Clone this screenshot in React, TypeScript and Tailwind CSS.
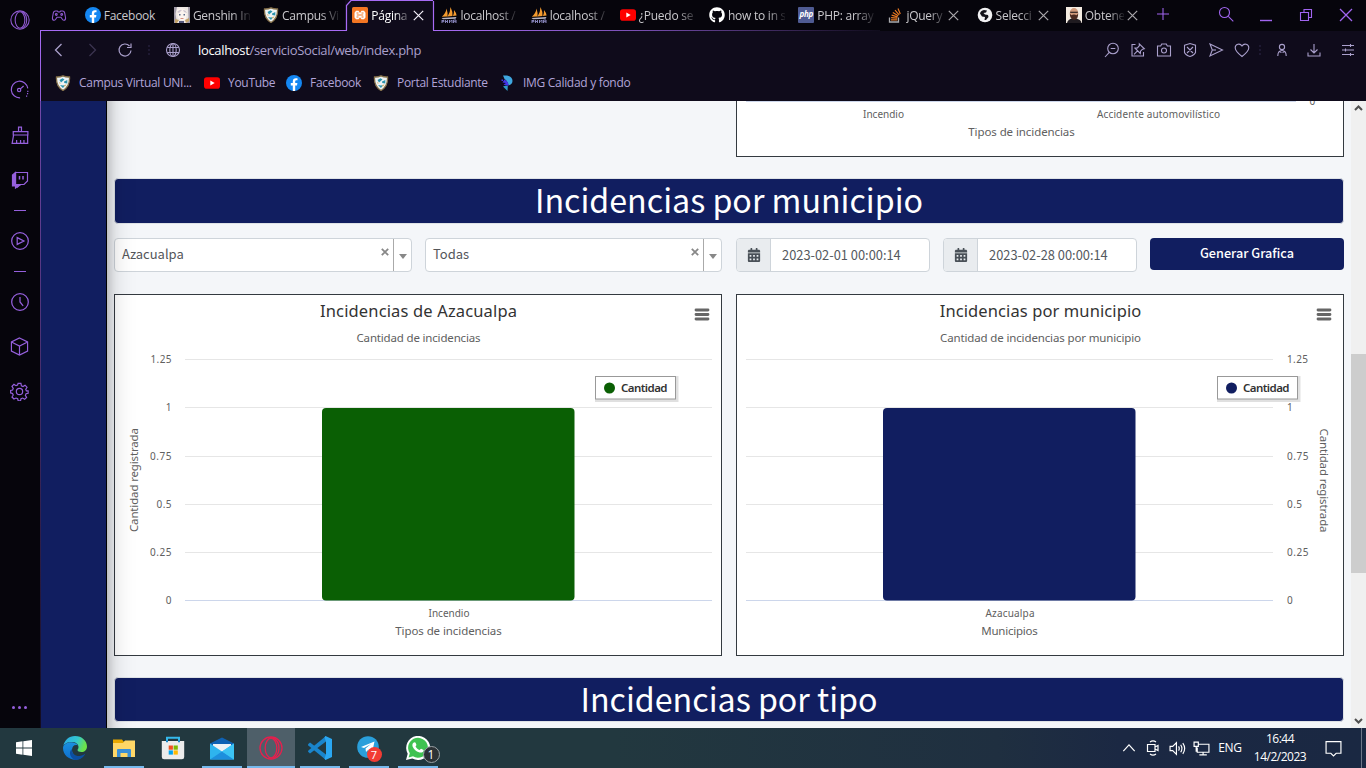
import type { ReactNode } from "react";
import { FaCalendarAlt, FaGithub } from "react-icons/fa";

const UI = "font-['Open_Sans','Noto_Sans',sans-serif]";
const BODY = "font-['Noto_Sans_CJK_SC',sans-serif]";

/* ---------- favicons ---------- */

const Fb = () => (
  <svg width="16" height="16" viewBox="0 0 16 16" className="shrink-0">
    <circle cx="8" cy="8" r="8" fill="#1487f2" />
    <path d="M6.800 16V10.400H4.800V8.100H6.800V6.400C6.800 4.300 8 3.200 9.900 3.200c.8 0 1.600.1 1.600.1v2h-1c-1 0-1.300.6-1.300 1.200v1.600h2.200l-.4 2.300H9.200V16z" fill="#fff" />
  </svg>
);
const Shield = () => (
  <svg width="16" height="16" viewBox="0 0 16 16" className="shrink-0">
    <path d="M1.500 2Q5 2.200 8 .8Q11 2.200 14.500 2C15 9 12.500 13 8 15.500C3.500 13 1 9 1.500 2z" fill="#eef3f4" stroke="#84704a" strokeWidth="1.300" />
    <path d="M4.500 5l3-1.800 2 1.200-3.500 3zM9 6.500l3.300-1.500v3.500l-3-.5zM5 10l3 .5 2-.5-2 3z" fill="#2b93ad" />
    <path d="M9.500 10l2-.5-2 2.500zM4 7l1.500 1L5 9z" fill="#dba33c" />
  </svg>
);
const Youtube = () => (
  <svg width="16" height="16" viewBox="0 0 16 16" className="shrink-0">
    <rect x="0" y="2.300" width="16" height="11.400" rx="2.800" fill="#f00" />
    <path d="M6.300 5.400v5.200L10.700 8z" fill="#fff" />
  </svg>
);
const Genshin = () => (
  <svg width="16" height="16" viewBox="0 0 16 16" className="shrink-0">
    <rect width="16" height="16" fill="#ece6e3" />
    <path d="M0 0h3L1.500 7 3 16H0zM14 0h2v16h-3l1.500-6z" fill="#a19ba8" />
    <path d="M3 3q5-4 10 1l-1 8q-4 3-8-1z" fill="#fbf3ee" />
    <path d="M3 5q3-3 5-2L5 6zM9 3q3 0 4 3l-3-1z" fill="#cfc6cf" />
    <path d="M5 7h1.500v1.500H5zM9.500 7H11v1.500H9.500z" fill="#5b6a88" />
    <path d="M6.500 11h3v1h-3z" fill="#d68e7e" />
    <path d="M1 12l4 1-2 3H1zM11 13l4-2v3l-3 2z" fill="#c2a36a" />
    <path d="M5 14h5v2H5z" fill="#54587a" />
  </svg>
);
const Xampp = () => (
  <svg width="16" height="16" viewBox="0 0 16 16" className="shrink-0">
    <rect width="16" height="16" rx="1.500" fill="#f37623" />
    <path d="M4 3.800h2.500L8 6l1.500-2.200H12l1.500 2v4.700L12 12.300H9.500L8 10.200l-1.500 2.100H4l-1.500-1.800V5.800z" fill="#fff" />
    <path d="M4.500 6h2M9.500 6h2M4.500 10h2M9.500 10h2M4.800 8h6.400" stroke="#f37623" strokeWidth="1.200" />
  </svg>
);
const Pma = () => (
  <svg width="16" height="16" viewBox="0 0 16 16" className="shrink-0">
    <path d="M.8 9.800Q5 6 5.500 1.500Q7 6 6.500 9.500zM6.500 9.500Q9.500 5 9.500 0Q12 5 11.500 9zM12 9Q13.300 6 13 3Q15.500 6 15.600 8.500z" fill="#f39b2e" />
    <path d="M.5 11l15-1-1 1.700L2 12.200z" fill="#b9b6c2" />
    <path d="M1 13v3M1 13.500h2v1.200H1M4.500 13v3M4.500 14.500h2M6.500 13v3M8.500 16v-3l1.200 1.500L11 13v3M12.500 16v-3h2.500v3M12.500 14.700H15" stroke="#8583b8" strokeWidth="1" fill="none" />
  </svg>
);
const Php = () => (
  <span className="flex h-4 w-4 shrink-0 items-center justify-center rounded-[1px] bg-[#4f5b93] pb-0.5 text-[8px] font-bold italic leading-none tracking-[-0.300px] text-white">php</span>
);
const Stack = () => (
  <svg width="16" height="16" viewBox="0 0 16 16" className="shrink-0" fill="none">
    <path d="M2.500 10.500V15h9v-4.500" stroke="#a9aaad" strokeWidth="1.300" />
    <path d="M4 12.800h6.300M4.100 10.600l6.200.6M4.600 8.200l6 1.600M5.800 5.600l5.400 3.100M8 3.200l4.200 4.600M11 1.500l2.300 5.500" stroke="#e87922" strokeWidth="1.200" />
  </svg>
);
const Globe = () => (
  <svg width="16" height="16" viewBox="0 0 16 16" className="shrink-0">
    <circle cx="8" cy="8" r="7.300" fill="#f1f1f3" />
    <path d="M3 6.500q.5-3 4-3.500l3 .5-1 2-2.500.5L8 7.500l3 .5.5 2L9 13H7.500l.5-3-3-.5z" fill="#111018" />
  </svg>
);
const Face = () => (
  <svg width="16" height="16" viewBox="0 0 16 16" className="shrink-0">
    <rect width="16" height="16" fill="#f4ece2" />
    <path d="M1 16q1-4 5-4.500l5 .3q4 1 4.500 4.200z" fill="#1f1b20" />
    <ellipse cx="8" cy="6" rx="4.200" ry="5" fill="#d09a7b" />
    <path d="M3.800 6.500q0 6 4.200 6.200t4.200-6.200l-1.500 1.700q-2.700-1.200-5.400 0z" fill="#4a2a20" />
    <path d="M4.200 5.300h7.600" stroke="#2f2322" strokeWidth="1.200" />
  </svg>
);

/* ---------- browser chrome ---------- */

type Tab = { icon: ReactNode; title: string; active?: boolean; close?: boolean; full?: boolean };
const tabs: Tab[] = [
  { icon: <Fb />, title: "Facebook", full: true },
  { icon: <Genshin />, title: "Genshin In" },
  { icon: <Shield />, title: "Campus Vi" },
  { icon: <Xampp />, title: "Página", active: true, close: true },
  { icon: <Pma />, title: "localhost /" },
  { icon: <Pma />, title: "localhost /" },
  { icon: <Youtube />, title: "¿Puedo se" },
  { icon: <FaGithub className="h-4 w-4 shrink-0 text-white" />, title: "how to in s" },
  { icon: <Php />, title: "PHP: array" },
  { icon: <Stack />, title: "jQuery", close: true },
  { icon: <Globe />, title: "Selecci", close: true },
  { icon: <Face />, title: "Obtene", close: true },
];

function TabItem({ icon, title, active, close, full }: Tab) {
  const fade = full
    ? "w-[57px]"
    : close
      ? "w-[39px] [mask-image:linear-gradient(to_right,black_60%,transparent_105%)]"
      : "w-[57px] [mask-image:linear-gradient(to_right,black_68%,transparent_104%)]";
  return (
    <div className={`flex h-[30px] w-[89.200px] shrink-0 items-center ${active ? "text-white" : "text-[#c9c8cc]"}`}>
      <span className="ml-[7px] flex">{icon}</span>
      <span className={`ml-[3px] whitespace-nowrap pt-px text-[12px] leading-[18px] tracking-[-0.250px] ${fade}`}>{title}</span>
      {close && (
        <svg width="11" height="11" viewBox="0 0 11 11" className="ml-[3px] shrink-0" stroke={active ? "#f4f0fa" : "#aaa8ac"} strokeWidth="1.200">
          <path d="M.8.8l9.400 9.400M10.200.8L.8 10.200" />
        </svg>
      )}
    </div>
  );
}

function ChromeOutline() {
  return (
    <svg className="pointer-events-none absolute left-0 top-0" width="1366" height="728" fill="none" strokeWidth="1.200">
      <defs>
        <linearGradient id="down" x1="0" y1="30" x2="0" y2="728" gradientUnits="userSpaceOnUse">
          <stop offset="0" stopColor="#a76bf5" />
          <stop offset=".15" stopColor="#8a58cc" />
          <stop offset="1" stopColor="#191028" />
        </linearGradient>
        <linearGradient id="across" x1="433" y1="0" x2="880" y2="0" gradientUnits="userSpaceOnUse">
          <stop offset="0" stopColor="#a76bf5" />
          <stop offset=".45" stopColor="#7a50b4" />
          <stop offset="1" stopColor="#100c1c" />
        </linearGradient>
      </defs>
      <rect x="40" y="30" width="1" height="698" fill="url(#down)" />
      <path d="M346.500 30V5.500L351 .5H433" stroke="#a76bf5" />
      <path d="M433.500 1v29" stroke="#a76bf5" />
      <rect x="40" y="30" width="307" height="1" fill="#a76bf5" />
      <rect x="433" y="30" width="447" height="1" fill="url(#across)" />
    </svg>
  );
}

const Stroke = ({ children, w = 16, c = "", sw = 1.1 }: { children: ReactNode; w?: number; c?: string; sw?: number }) => (
  <svg width={w} height={w} viewBox="0 0 16 16" fill="none" stroke="currentColor" strokeWidth={sw} className={`shrink-0 ${c}`}>
    {children}
  </svg>
);

function TabBar() {
  return (
    <div className="flex h-[31px] bg-[#06050c]">
      <div className="flex w-[37.700px] shrink-0 items-center justify-center text-[#8d59ce]">
        <Stroke>
          <path d="M4.500 3h1.800l1 1h1.400l1-1h1.800q2 0 2.300 2.500l.8 4.500q0 2.300-1.800 2.300-1 0-2-1.800l-.8-1.200H6l-.8 1.200q-1 1.800-2 1.800-1.800 0-1.800-2.300L2.200 5.500q.3-2.500 2.300-2.500z" />
          <circle cx="5.300" cy="6.500" r=".9" />
          <circle cx="10.700" cy="6.500" r=".9" />
        </Stroke>
      </div>
      <div className="flex min-w-0 flex-1">
        {tabs.map((t, i) => (
          <div key={i} className={t.active ? "h-[31px] bg-[#0f0b1b]" : "h-[31px]"}>
            <TabItem {...t} />
          </div>
        ))}
        <div className="flex h-[27px] w-[30px] items-center pl-[9px] text-[#a165f0]">
          <Stroke w={12} sw={1.4}><path d="M8 0v16M0 8h16" /></Stroke>
        </div>
      </div>
      <div className="flex h-[30px] w-[160px] items-center text-[#a165f0]">
        <div className="flex w-10 justify-center"><Stroke c="-mt-0.5"><circle cx="6.500" cy="6.500" r="5" /><path d="M10.300 10.300l5 5" /></Stroke></div>
        <div className="flex w-10 justify-center"><Stroke><path d="M2 13.500h12" strokeWidth="1.400" /></Stroke></div>
        <div className="flex w-10 justify-center"><Stroke><path d="M2.500 5.500h8v8h-8zM6 5.500v-3h7.500v8h-3" /></Stroke></div>
        <div className="flex w-10 justify-center"><Stroke sw={1.3}><path d="M2 2l12 12M14 2L2 14" /></Stroke></div>
      </div>
    </div>
  );
}

function AddressBar() {
  return (
    <div className="flex h-[38px] items-center pl-px text-[#aaa0cc]">
      <div className="flex w-[35px] justify-center"><Stroke><path d="M10.500 2L4.500 8l6 6" strokeWidth="1.300" /></Stroke></div>
      <div className="flex w-[32px] justify-center text-[#3b3450]"><Stroke><path d="M5.500 2L11.500 8l-6 6" strokeWidth="1.300" /></Stroke></div>
      <div className="flex w-[33px] justify-center"><Stroke><path d="M14 8.500A6 6 0 1 1 12.500 4M14 1.500v4h-4" strokeWidth="1.200" /></Stroke></div>
      <div className="flex w-[15px] justify-center text-[#2d2745]"><Stroke><path d="M8 3v2M8 7v2M8 11v2" /></Stroke></div>
      <div className="flex w-[34px] justify-center">
        <Stroke><circle cx="8" cy="8" r="6.500" /><ellipse cx="8" cy="8" rx="3.200" ry="6.500" /><path d="M2.200 5.500h11.600M2.200 10.500h11.600M8 1.500v13" /></Stroke>
      </div>
      <div className="ml-[8px] flex-1 whitespace-nowrap text-[13px] leading-5 tracking-[-0.330px]">
        <span className="text-white">localhost</span>/servicioSocial/web/index.php
      </div>
      <div className="-mr-px flex items-center">
        <div className="flex w-[26px] justify-center"><Stroke><circle cx="9" cy="6.500" r="5.300" /><path d="M5.300 10.300L1 15M6.700 6.500h4.600" /></Stroke></div>
        <div className="flex w-[26px] justify-center"><Stroke><path d="M5.500 2.500H2v11.500h11.500v-4" /><path d="M9.300 1.800l5 5-1.800.4-2 2-.2 2.300L5 6.200l2.400-.3 1.900-2zM7.500 8.800L4 12.300" /></Stroke></div>
        <div className="flex w-[26px] justify-center"><Stroke><path d="M1.500 4h3.200l1-2h4.600l1 2h3.200v10h-13z" /><circle cx="8" cy="8.500" r="2.500" /></Stroke></div>
        <div className="flex w-[26px] justify-center"><Stroke><path d="M2.500 3.200L8 1.500l5.500 1.700v7.300q-1 2.500-5.500 4-4.500-1.500-5.500-4zM5 5l6 6M11 5l-6 6" /></Stroke></div>
        <div className="flex w-[26px] justify-center"><Stroke><path d="M2 2l12.500 6L2 14l2.300-6z" /><path d="M4.300 8H8" /></Stroke></div>
        <div className="flex w-[26px] justify-center"><Stroke><path d="M8 14.500C4 11.300 1.200 8.800 1.200 5.700 1.200 2 6 .8 8 4c2-3.200 6.800-2 6.800 1.700 0 3.100-2.800 5.600-6.800 8.800z" /></Stroke></div>
        <div className="flex w-[9px] justify-center text-[#2d2745]"><Stroke><path d="M8 3v2M8 7v2M8 11v2" /></Stroke></div>
        <div className="flex w-[35px] justify-center"><Stroke><circle cx="8" cy="5" r="2.600" /><path d="M3.800 14q0-5.500 4.200-5.500T12.200 14M5 9.500l2.500 1M11 9.500l-2.500 1" /></Stroke></div>
        <div className="flex w-[30px] justify-center"><Stroke><path d="M8 2v8.500M4.500 7.500L8 11l3.500-3.500M2 10.500V14h12v-3.500" /></Stroke></div>
        <div className="flex w-[38px] justify-center"><Stroke><path d="M2 3.500h12M2 8h12M2 12.500h12M10.500 2v3M5.500 6.500v3M10.500 11v3" /></Stroke></div>
      </div>
    </div>
  );
}

function Bookmarks() {
  return (
    <div className="flex h-[32px] items-center whitespace-nowrap pb-[4px] pl-[15px] text-[12px] leading-4 tracking-[-0.300px] text-[#b1a4d8]">
      <div className="flex w-[149px] items-center gap-[8px]"><Shield />Campus Virtual UNI...</div>
      <div className="flex w-[82px] items-center gap-[8px]"><Youtube />YouTube</div>
      <div className="flex w-[87px] items-center gap-[8px]"><Fb />Facebook</div>
      <div className="flex w-[126px] items-center gap-[8px]"><Shield />Portal Estudiante</div>
      <div className="flex items-center gap-[8px]">
        <svg width="16" height="16" viewBox="0 0 16 16">
          <path d="M4 .5h4q5.500 1 5.500 5.500 0 3-4 4.500-.5-4-4-6.500z" fill="#3fa7e0" />
          <path d="M5.500 4.500q4 2 4 6-2.500.5-5-1l2.500-1.500-3.500-.5z" fill="#4636e8" />
          <path d="M2.500 4.500h1.500V6H2.500z" fill="#4636e8" />
          <path d="M4 11.500l4.500 4.500 .3-5q-2.500-.8-4.800.5z" fill="#2f9ac4" />
        </svg>
        IMG Calidad y fondo
      </div>
    </div>
  );
}

function OperaRing({ size, color }: { size: number; color: string }) {
  return (
    <svg width={size} height={size} viewBox="0 0 24 24" fill="none" stroke={color} strokeWidth="1.300">
      <circle cx="12" cy="12" r="11" />
      <ellipse cx="12" cy="12" rx="5.800" ry="9.800" />
      <path d="M14 1.800q6 3 6 10.200t-6 10.200" />
    </svg>
  );
}

function SideRail() {
  const cell = "flex h-[45px] items-center justify-center";
  return (
    <div className="flex w-10 shrink-0 flex-col bg-[#06050c] pr-[1px] text-[#9560dd]">
      <div className="flex h-[67px] justify-center pt-[10px]"><OperaRing size={20} color="#8d59ce" /></div>
      <div className={cell}><Stroke w={19} sw={1}><path d="M8.500 15A7 7 0 1 1 15 7M15 9v1M14.800 11v1M14 13v1" /><circle cx="7.700" cy="8.500" r="1.400" /><path d="M8.700 7.500L11.500 5" /></Stroke></div>
      <div className={cell}><Stroke w={18} sw={1.1}><path d="M6.700 5V1h2.600v4M2 5h13v3H2zM2.300 8L1 15.500h13.800V8M5 15v-2.500M8.500 15v-2.500M11.500 15v-2.500" /></Stroke></div>
      <div className={cell}>
        <svg width="18" height="18" viewBox="0 0 18 18" fill="none" stroke="currentColor" strokeWidth="1.200">
          <path d="M4.500 1.500h12V10l-3.500 3.500h-3.500L6.500 16v-2.500h-2z" />
          <path d="M4.500 1.500L1.500 4v11h3v2l2.500-2 2.500-1.500h-5z" fill="currentColor" />
          <path d="M8.500 5v3.500M12 5v3.500" strokeWidth="1.500" />
        </svg>
      </div>
      <div className="flex h-[16px] items-center justify-center"><span className="h-px w-3 bg-[#9560dd]" /></div>
      <div className={cell}><Stroke w={18} sw={1.1}><circle cx="8" cy="8" r="7.400" /><path d="M5.500 5v6l6-3z" /></Stroke></div>
      <div className="flex h-[16px] items-center justify-center"><span className="h-px w-3 bg-[#9560dd]" /></div>
      <div className={cell}><Stroke w={18} sw={1.1}><circle cx="8" cy="8" r="7.400" /><path d="M8 3.500V8l2.800 3.500" /></Stroke></div>
      <div className={cell}><Stroke w={19} sw={1}><path d="M8 .8l6.800 3.400v7.600L8 15.200l-6.800-3.400V4.200zM1.200 4.200L8 7.700l6.800-3.500M8 7.700v7.500" /></Stroke></div>
      <div className={cell}>
        <svg width="19" height="19" viewBox="0 0 24 24" fill="none" stroke="currentColor" strokeWidth="1.500">
          <circle cx="12" cy="12" r="4" />
          <path d="M10.200 1.800h3.600l.6 3 2 .9 2.600-1.700 2.500 2.600-1.600 2.600.8 2h2.200v3l-2.600.6-.9 2.100 1.600 2.500-2.500 2.500-2.600-1.600-2 .9-.6 2.500h-3l-.6-2.500-2.100-.9L5 21.500 2.500 19l1.600-2.600-.9-2-2.400-.6v-3.200l2.500-.4.8-2.200L2.500 5.500 5 3l2.600 1.600 2-.8z" />
        </svg>
      </div>
      <div className="flex flex-1 items-end justify-center gap-[3px] pb-[19px]">
        <span className="h-[3px] w-[3px] rounded-full bg-[#9560dd]" />
        <span className="h-[3px] w-[3px] rounded-full bg-[#9560dd]" />
        <span className="h-[3px] w-[3px] rounded-full bg-[#9560dd]" />
      </div>
    </div>
  );
}

/* ---------- page ---------- */

function Banner({ children, h }: { children: ReactNode; h: string }) {
  return (
    <div className={`${h} flex shrink-0 items-center justify-center rounded-[4px] border border-[#dee2e6] bg-[#111e60] pb-[4px] text-[32.200px] leading-[40px] text-white`}>
      <span>{children}</span>
    </div>
  );
}

function Select({ value, w }: { value: string; w: string }) {
  return (
    <div className={`${w} flex h-[34px] rounded-[4px] border border-[#ced4da] bg-white text-[#54565a]`}>
      <span className="flex-1 pl-[7px] pt-[5px] text-[13px] leading-[20px]">{value}</span>
      <svg width="8" height="8" viewBox="0 0 8 8" className="mr-[4px] mt-[9px]" stroke="#888" strokeWidth="1.800"><path d="M.8.8l6.400 6.400M7.200.8L.8 7.200" /></svg>
      <span className="flex w-[18px] justify-center border-l border-[#aaa] pt-[15px]">
        <svg width="8" height="5" viewBox="0 0 8 5"><path d="M0 0h8L4 5z" fill="#888" /></svg>
      </span>
    </div>
  );
}

function DateField({ value }: { value: string }) {
  return (
    <div className="flex h-[34px] w-[194px] overflow-hidden rounded-[4px] border border-[#ced4da] bg-white text-[#54595e]">
      <span className="flex w-[34px] items-center justify-center border-r border-[#ced4da] bg-[#e9ecef]">
        <FaCalendarAlt className="h-[14px] w-[14px] text-[#495057]" />
      </span>
      <span className="whitespace-nowrap pl-[11px] pt-[6px] text-[12.850px] leading-[20px]">{value}</span>
    </div>
  );
}

const grid = [65.5, 113.5, 162.5, 210.5, 258.5, 306.5];
const ticks = ["1.25", "1", "0.75", "0.5", "0.25", "0"];
const tickW = [21, 5.5, 21.5, 15, 21.5, 6];

type Series = {
  title: string; titleW: number; sub: string; subW: number;
  cat: string; catW: number; axis: string; axisW: number;
  color: string; opposite?: boolean;
};

function Chart({ title, titleW, sub, subW, cat, catW, axis, axisW, color, opposite }: Series) {
  const x0 = opposite ? 10 : 71;
  const mid = x0 + 263.5;
  const barX = x0 + 137;
  return (
    <div className="h-[362px] w-[608px] border border-[#343a40] bg-white">
      <svg width="606" height="360" viewBox="1 1 606 360" className="block font-['Noto_Sans',sans-serif]" fill="#606060">
        {grid.map((y, i) => (
          <path key={y} d={`M${x0} ${y}h527`} stroke={i === 5 ? "#ccd6eb" : "#e6e6e6"} />
        ))}
        <rect x={barX} y="114" width="252.500" height="192.500" rx="4" fill={color} />
        <text x="304.500" y="23" textAnchor="middle" fontSize="16.500" fill="#333" textLength={titleW}>{title}</text>
        <text x="304.500" y="48" textAnchor="middle" fontSize="11.500" textLength={subW}>{sub}</text>
        {ticks.map((t, i) => (
          <text key={t} x={opposite ? 551 : 57.5} y={grid[i] + 3.5} textAnchor={opposite ? "start" : "end"} fontSize="10" textLength={tickW[i]}>{t}</text>
        ))}
        <text x={mid + 0.5} y="323" textAnchor="middle" fontSize="10" textLength={catW}>{cat}</text>
        <text x={mid} y="341" textAnchor="middle" fontSize="11.500" textLength={axisW}>{axis}</text>
        <text transform={opposite ? "translate(584 186.500) rotate(90)" : "translate(23.500 186) rotate(-90)"} textAnchor="middle" fontSize="11.500" textLength="104">Cantidad registrada</text>
        <rect x="482.500" y="83.500" width="80.500" height="23" fill="none" stroke="#000" strokeOpacity=".12" strokeWidth="3" />
        <rect x="481.500" y="82.500" width="80" height="22.500" fill="#fff" stroke="#999" />
        <circle cx="495.500" cy="94" r="5.500" fill={color} />
        <text x="507" y="98" fontSize="11.500" fontWeight="600" fill="#333" textLength="46.500">Cantidad</text>
        <path d="M582 16h12M582 20.500h12M582 25h12" stroke="#666" strokeWidth="2.800" strokeLinecap="round" />
      </svg>
    </div>
  );
}

function Page() {
  return (
    <div className={`flex min-h-0 flex-1 overflow-hidden bg-[#f4f6f9] pl-px ${BODY}`}>
      <aside className="relative z-10 -my-20 w-[66px] shrink-0 border-r border-black bg-[#111e60] shadow-[0_14px_28px_rgba(0,0,0,0.250),0_10px_10px_rgba(0,0,0,0.220)]" />
      <main className="flex w-[1244px] shrink-0 flex-col overflow-hidden px-[7px]">
        <div className="ml-[622px] h-[56px] w-[608px] shrink-0 border border-t-0 border-[#343a40] bg-white">
          <svg width="606" height="55" viewBox="1 101 606 55" className="block font-['Noto_Sans',sans-serif]" fill="#606060">
            <path d="M10 101.500h550" stroke="#ccd6eb" />
            <text x="573.500" y="105" fontSize="10">0</text>
            <text x="147.500" y="118" fontSize="10" textAnchor="middle" textLength="41">Incendio</text>
            <text x="422.500" y="118" fontSize="10" textAnchor="middle" textLength="123">Accidente automovilístico</text>
            <text x="285.500" y="136" fontSize="11.500" textAnchor="middle" textLength="106.500">Tipos de incidencias</text>
          </svg>
        </div>
        <div className="h-[21px] shrink-0" />
        <Banner h="h-[46px]">Incidencias por municipio</Banner>
        <div className="mt-[14px] flex shrink-0 items-start">
          <Select value="Azacualpa" w="w-[298px]" />
          <span className="w-[13px]" />
          <Select value="Todas" w="w-[297px]" />
          <span className="w-[14px]" />
          <DateField value="2023-02-01 00:00:14" />
          <span className="w-[13px]" />
          <DateField value="2023-02-28 00:00:14" />
          <button className="ml-[13px] h-[32px] w-[194px] rounded-[4px] bg-[#111e60] pb-[2px] text-[12.700px] font-medium leading-[20px] text-white">Generar Grafica</button>
        </div>
        <div className="mt-[22px] flex shrink-0 gap-[14px]">
          <Chart title="Incidencias de Azacualpa" titleW={197} sub="Cantidad de incidencias" subW={124} cat="Incendio" catW={41} axis="Tipos de incidencias" axisW={106.5} color="#0a5f04" />
          <Chart title="Incidencias por municipio" titleW={201.5} sub="Cantidad de incidencias por municipio" subW={201} cat="Azacualpa" catW={49} axis="Municipios" axisW={56.5} color="#111e60" opposite />
        </div>
        <div className="h-[21px] shrink-0" />
        <Banner h="h-[45px]">Incidencias por tipo</Banner>
      </main>
      <div className="flex w-[15px] flex-col items-center bg-[#f0f0f0] pt-[4px]">
        <svg width="9" height="6" viewBox="0 0 9 6" fill="none" stroke="#505050" strokeWidth="2"><path d="M1 5l3.500-3.500L8 5" /></svg>
        <div className="mt-[243px] h-[219px] w-full bg-[#cdcdcd]" />
        <svg width="9" height="6" viewBox="0 0 9 6" fill="none" stroke="#505050" strokeWidth="2" className="mb-[4px] mt-auto"><path d="M1 1l3.500 3.500L8 1" /></svg>
      </div>
    </div>
  );
}

/* ---------- taskbar ---------- */

function TaskApp({ children, bar, active }: { children: ReactNode; bar?: boolean; active?: boolean }) {
  return (
    <div className="flex h-10 w-[49px] flex-col items-center">
      <div className={`flex h-[38px] items-center justify-center pt-[2px] ${active ? "w-12 bg-[#4e5f69]" : "w-12"}`}>{children}</div>
      <div className={`h-[2px] ${active ? "w-12" : "w-10"} ${bar || active ? "bg-[#76b9ed]" : ""}`} />
    </div>
  );
}

function Taskbar() {
  return (
    <div className="flex h-10 shrink-0 bg-[linear-gradient(to_right,#22383f_0%,#22383f_45%,#1f2f40_73%,#1b2843_82%,#1a2842_100%)] text-white">
      <div className="flex w-[50px] items-center pl-[16px]">
        <svg width="16" height="16" viewBox="0 0 16 16" fill="#fff"><path d="M0 2.200L6.500 1.300V7.500H0zM7.300 1.200L16 0v7.500H7.300zM0 8.400h6.500v6.300L0 13.800zM7.300 8.400H16V16l-8.700-1.200z" /></svg>
      </div>
      <TaskApp>
        <svg width="24" height="24" viewBox="0 0 24 24">
          <defs>
            <linearGradient id="e1" x1="0" y1="0" x2="1" y2=".3"><stop offset="0" stopColor="#2aa8e8" /><stop offset=".6" stopColor="#33c7d0" /><stop offset="1" stopColor="#6be24a" /></linearGradient>
            <linearGradient id="e2" x1="0" y1="0" x2="0" y2="1"><stop offset="0" stopColor="#1a90e0" /><stop offset="1" stopColor="#0f6fce" /></linearGradient>
          </defs>
          <path d="M.3 10C1.500 4 6 0 12 0c7 0 12 5 12 10.500 0 3.500-2.500 5.500-5.500 5.500-2.500 0-4-1-4-2 0-.6 1-1.200 1-3 0-3-3-5-6.500-5C5 6 1.500 7.500.3 10z" fill="url(#e1)" />
          <path d="M0 12C0 8.500 4 6 8.500 6.200c3 .1 5.500 1.300 6.500 3.300-3-1.500-6 .5-6 4.500 0 5 5 8 9 8.300-8 4-18-1.300-18-10.300z" fill="url(#e2)" />
          <path d="M8.800 13c-.5 4.500 4 7.500 8 7 2.500-.3 4.500-1.500 5.500-2.500-1 3-5 6.500-10 6.500C8 23 4.800 16.500 8.800 13z" fill="#0c4ea0" />
        </svg>
      </TaskApp>
      <TaskApp bar>
        <svg width="22" height="20" viewBox="0 0 22 20">
          <path d="M0 1.500h9l1.500 2H21V19H0z" fill="#e9a800" />
          <path d="M0 5h22v14H0z" fill="#ffd767" />
          <path d="M10 5l2-2.500h10V6z" fill="#ffd767" />
          <path d="M4 19v-7q0-1 1-1h12q1 0 1 1v7h-3.500v-4h-7v4z" fill="#3a8fd8" />
        </svg>
      </TaskApp>
      <TaskApp>
        <svg width="24" height="24" viewBox="0 0 24 24">
          <path d="M6 6V1.800h12V6" fill="none" stroke="#35b9ec" strokeWidth="2" />
          <path d="M.8 5h22.400v16q0 2.300-2.300 2.300H3.100Q.8 23.300.8 21z" fill="#ececec" />
          <path d="M5 4.500h2v1.800H5zM17 4.500h2v1.800h-2z" fill="#1a86c8" />
          <path d="M7.700 9.500h4.200v4.200H7.700z" fill="#f25022" /><path d="M12.600 9.500h4.200v4.200h-4.200z" fill="#7fba00" />
          <path d="M7.700 14.400h4.200v4.200H7.700z" fill="#00a4ef" /><path d="M12.600 14.400h4.200v4.200h-4.200z" fill="#ffb900" />
        </svg>
      </TaskApp>
      <TaskApp bar>
        <svg width="24" height="23" viewBox="0 0 24 23">
          <path d="M0 6.500L12 .5l12 6V14H0z" fill="#0f61b3" />
          <path d="M3 7h18v9H3z" fill="#eef2f5" />
          <path d="M0 6.500l12 8 12-8V22.500H0z" fill="#2eb4ee" />
          <path d="M0 22.500l12-8 12 8z" fill="#1d8fdd" /><path d="M12 14.500l12-8v16z" fill="#3cc4f4" />
        </svg>
      </TaskApp>
      <TaskApp active><OperaRing size={24} color="#e5204e" /></TaskApp>
      <TaskApp bar>
        <svg width="24" height="24" viewBox="0 0 24 24">
          <path d="M0 8.200l2-1.700L18 18.500V24L.3 9.500z" fill="#1a85cc" />
          <path d="M0 15.800l2 1.700L18 5.500V0L.3 14.500z" fill="#1a85cc" />
          <path d="M17.500 0L24 3v18l-6.500 3-1-1.200 1.500-4.500V5.700L16.500 1.200z" fill="#2aa7f2" />
        </svg>
      </TaskApp>
      <TaskApp bar>
        <div className="relative">
          <svg width="24" height="24" viewBox="0 0 24 24"><circle cx="11" cy="11" r="10.800" fill="#2a9fdb" /><path d="M4 11L17.500 5.500 15 17l-4-3-2 2-.5-3.500L14 8l-7 4z" fill="#fff" /></svg>
          <span className="absolute left-[10px] top-[11px] flex h-[15px] w-[15px] items-center justify-center rounded-full bg-[#f23c34] text-[11px] leading-none">7</span>
        </div>
      </TaskApp>
      <TaskApp bar>
        <div className="relative">
          <svg width="24" height="24" viewBox="0 0 24 24">
            <path d="M0 24l1.700-6.200A12 12 0 1 1 6.300 22.400z" fill="#fff" />
            <path d="M2.600 21.400l1.200-4.100A9.900 9.900 0 1 1 7 20.300z" fill="#3fc251" />
            <path d="M8.700 6.300c.5 0 .8.2 1 .8l.7 1.700c.1.500-.8 1.300-.8 1.600 1 1.900 2.300 2.800 4 3.500.5.100 1-1.200 1.500-1.200l2 1c.8.400.6 1 .2 1.800-.7 1-2.200 1.400-3.700.9-4-1.200-6-3.600-7-6-.6-1.700 0-4 2.100-4.100z" fill="#fff" />
          </svg>
          <span className="absolute left-[17px] top-[10px] flex h-[17px] w-[17px] items-center justify-center rounded-full border border-[#9aa1a5] bg-[#2c3236] text-[12px] leading-none">1</span>
        </div>
      </TaskApp>
      <div className="ml-auto flex w-[249px] items-center">
        <div className="flex w-6 justify-center"><Stroke w={14} sw={1.4}><path d="M1.500 11.500L8 4.500l6.500 7" /></Stroke></div>
        <div className="flex w-6 justify-center"><Stroke sw={1.2}><path d="M2.500 4.500h7.500v7H2.500zM10 7l3-1.500v5L10 9M5 2Q8-.2 11 2M5 14Q8 16.200 11 14" /></Stroke></div>
        <div className="flex w-6 justify-center"><Stroke w={17} sw={1.1}><path d="M1 6v4h2.500L7 13.500v-11L3.500 6zM9 6q1.300 2 0 4M11 4.500q2.300 3.500 0 7M13 3q3.500 5 0 10" /></Stroke></div>
        <div className="flex w-6 justify-center"><Stroke w={17} sw={1.1}><path d="M5.500 4H15v7.500H4V7M9.500 11.500V14M6 14h7M1 2h4v4H1zM3 6v5" /></Stroke></div>
        <div className="flex w-[34px] justify-center text-[12px] tracking-[-0.300px]">ENG</div>
        <div className="flex w-[66px] flex-col items-center text-[12px] leading-[18px] tracking-[-0.500px]"><span>16:44</span><span>14/2/2023</span></div>
        <div className="ml-[11px] flex w-[18px] justify-center"><Stroke w={17} sw={1.1}><path d="M1 1.500h14v11h-4.500L8 15l-2.500-2.500H1z" /></Stroke></div>
        <div className="ml-[19px] h-10 w-px bg-[#6d7688]" />
      </div>
    </div>
  );
}

export default function App() {
  return (
    <div className={`relative flex h-[768px] w-[1366px] flex-col overflow-hidden bg-[#06050c] ${UI}`}>
      <div className="flex min-h-0 flex-1">
        <SideRail />
        <div className="flex min-w-0 flex-1 flex-col bg-[#0f0b1b]">
          <TabBar />
          <AddressBar />
          <Bookmarks />
          <Page />
        </div>
      </div>
      <Taskbar />
      <ChromeOutline />
    </div>
  );
}
